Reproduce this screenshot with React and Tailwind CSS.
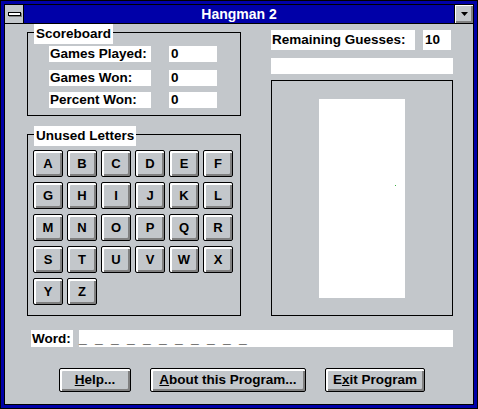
const LETTERS = 'ABCDEFGHIJKLMNOPQRSTUVWXYZ'.split('');

const raised = 'bg-[#c3c7cb] border border-black rounded-[2px] shadow-[inset_2px_2px_0_#ffffff,inset_-2px_-2px_0_#808080]';

function GroupBox({ label, className, children }) {
  return (
    <div className={`relative border border-black ${className}`}>
      <span className="absolute top-[-9px] left-[6px] bg-white px-[2px] leading-[20px]">{label}</span>
      {children}
    </div>
  );
}

function ScoreRow({ label, value, className }) {
  return (
    <div className={`flex h-[16px] items-center ${className}`}>
      <span className="w-[102px] h-full bg-white pl-[1px] leading-[16px]">{label}</span>
      <span className="ml-[18px] w-[48px] h-full bg-white pl-[2px] leading-[16px]">{value}</span>
    </div>
  );
}

export default function App() {
  return (
    <div
      className="w-[478px] h-[409px] border border-black bg-[#0000a8] p-[3px] text-black font-bold text-[13.5px]"
      style={{ fontFamily: '"Liberation Sans", Arial, sans-serif' }}
    >
      <div className="h-full flex flex-col border border-black bg-[#c3c7cb]">
        {/* Title bar */}
        <div className="flex h-[19px] border-b border-black shrink-0">
          <div className="w-[19px] border-r border-black bg-[#c3c7cb] flex items-center justify-center">
            <div className="w-[13px] h-[4px] bg-white border border-black shadow-[1px_1px_0_#808080]" />
          </div>
          <div className="flex-1 bg-[#0000a8] text-white text-center leading-[18px] text-[14px]">Hangman 2</div>
          <div className="w-[19px] border-l border-black bg-[#c3c7cb] flex items-center justify-center shadow-[inset_1px_1px_0_#ffffff,inset_-2px_-2px_0_#808080]">
            <svg width="7" height="4" viewBox="0 0 7 4"><path d="M0 0h7L3.5 4z" fill="#000" /></svg>
          </div>
        </div>

        {/* Client */}
        <div className="flex-1 pl-[22px]">
          <div className="flex">
            {/* Left column */}
            <div className="w-[214px]">
              <GroupBox label="Scoreboard" className="mt-[8px] h-[84px] pl-[21px] pt-[13px]">
                <ScoreRow label="Games Played:" value="0" />
                <ScoreRow label="Games Won:" value="0" className="mt-[8px]" />
                <ScoreRow label="Percent Won:" value="0" className="mt-[6px]" />
              </GroupBox>

              <GroupBox label="Unused Letters" className="mt-[18px] h-[182px] pl-[5px] pt-[15px]">
                <div className="grid grid-cols-[repeat(6,30px)] auto-rows-[27px] gap-x-[4px] gap-y-[5px]">
                  {LETTERS.map((l) => (
                    <button key={l} className={`${raised} flex items-center justify-center text-[13px] leading-none p-0`}>
                      {l}
                    </button>
                  ))}
                </div>
              </GroupBox>
            </div>

            {/* Right column */}
            <div className="ml-[30px] w-[182px]">
              <div className="mt-[6px] flex h-[20px]">
                <span className="w-[144px] bg-white pl-[1px] leading-[20px]">Remaining Guesses:</span>
                <span className="ml-[8px] w-[28px] bg-white pl-[2px] leading-[20px]">10</span>
              </div>
              <div className="mt-[8px] h-[16px] bg-white" />
              <div className="mt-[6px] h-[236px] border border-black pl-[47px] pt-[18px]">
                <div className="relative w-[86px] h-[199px] bg-white">
                  <div className="absolute left-[76px] top-[86px] w-[1px] h-[1px] bg-[#3cb043]" />
                </div>
              </div>
            </div>
          </div>

          {/* Word row */}
          <div className="mt-[14px] ml-[4px] flex h-[17px]">
            <span className="w-[42px] bg-white pl-[1px] leading-[17px]">Word:</span>
            <div className="ml-[6px] w-[374px] bg-white flex items-end leading-[17px] text-[14px]">
              {Array.from({ length: 11 }).map((_, i) => (
                <span key={i} className="w-[16px]">_</span>
              ))}
            </div>
          </div>

          {/* Buttons */}
          <div className="mt-[21px] ml-[32px] flex gap-[19px]">
            <button className={`${raised} w-[72px] h-[24px] leading-none`}>
              <u>H</u>elp...
            </button>
            <button className={`${raised} w-[156px] h-[24px] leading-none`}>
              <u>A</u>bout this Program...
            </button>
            <button className={`${raised} w-[100px] h-[24px] leading-none`}>
              E<u>x</u>it Program
            </button>
          </div>
        </div>
      </div>
    </div>
  );
}
